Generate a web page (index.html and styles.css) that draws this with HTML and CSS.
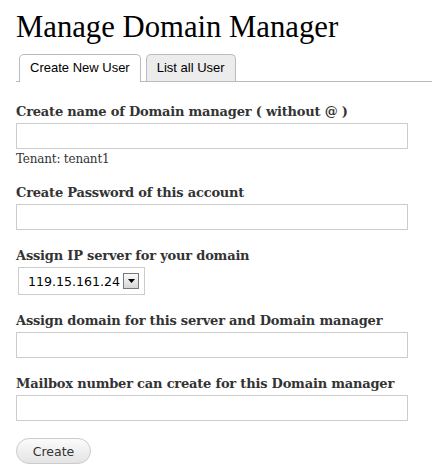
FILE: index.html
```html
<!DOCTYPE html>
<html>
<head>
<meta charset="utf-8">
<link rel="stylesheet" href="styles.css">
</head>
<body>
<div class="page">
  <h1 class="title">Manage Domain Manager</h1>
  <div class="tabs">
    <span class="tab active">Create New User</span>
    <span class="tab">List all User</span>
  </div>
  <form class="form">
    <div class="field">
      <label class="label">Create name of Domain manager ( without @ )</label>
      <input class="text" type="text">
      <div class="hint">Tenant: tenant1</div>
    </div>
    <div class="field">
      <label class="label">Create Password of this account</label>
      <input class="text" type="password">
    </div>
    <div class="field">
      <label class="label">Assign IP server for your domain</label>
      <div class="select">
        <span class="select-value">119.15.161.24</span>
        <span class="select-btn"><svg width="7" height="4" viewBox="0 0 7 4"><path d="M0 0H7L3.5 4Z" fill="#000"/></svg></span>
      </div>
    </div>
    <div class="field">
      <label class="label">Assign domain for this server and Domain manager</label>
      <input class="text" type="text">
    </div>
    <div class="field">
      <label class="label">Mailbox number can create for this Domain manager</label>
      <input class="text" type="text">
    </div>
    <button class="btn" type="button">Create</button>
  </form>
</div>
</body>
</html>
```
FILE: styles.css
```css
html, body { margin: 0; padding: 0; background: #fff; }
.page { padding: 8px 24px 0 16px; }
.title {
  margin: 0;
  font-family: "Liberation Serif", serif;
  font-weight: normal;
  font-size: 30.7px;
  line-height: 38px;
  color: #000;
}
.tabs {
  margin-top: 8px;
  display: flex;
  gap: 5px;
  padding-left: 3px;
  border-bottom: 1px solid #bbb;
  margin-right: -24px;
  height: 27px;
}
.tab {
  font-family: "Liberation Sans", sans-serif;
  font-size: 13px;
  color: #000;
  border: 1px solid #bbb;
  border-bottom: none;
  border-radius: 5px 5px 0 0;
  padding: 0 10px;
  line-height: 26px;
  height: 27px;
  box-sizing: border-box;
  background: #ececec;
}
.tab.active { background: #fff; height: 28px; }
.form { padding-top: 21px; }
.field { margin-bottom: 17px; }
.label {
  display: block;
  font-family: "DejaVu Serif", serif;
  font-weight: bold;
  font-size: 13px;
  color: #333;
  line-height: 18px;
  margin-bottom: 2px;
  letter-spacing: -0.2px;
}
.text {
  display: block;
  box-sizing: border-box;
  width: 392px;
  height: 26px;
  border: 1px solid #ccc;
  margin: 0;
  padding: 0 4px;
}
.hint {
  font-family: "DejaVu Serif", serif;
  font-size: 12px;
  line-height: 15px;
  letter-spacing: -0.2px;
  color: #333;
  margin-top: 3px;
}
.select {
  margin-left: 2px;
  display: flex;
  align-items: center;
  width: 127px;
  height: 28px;
  box-sizing: border-box;
  border: 1px solid #ccc;
  padding: 0 5px 0 9px;
  font-family: "DejaVu Sans", sans-serif;
  font-size: 12.6px;
  color: #000;
  justify-content: space-between;
}
.select-btn {
  width: 16px; height: 16px; box-sizing: border-box;
  border: 1px solid #777;
  background: linear-gradient(#fafafa, #d6d6d6);
  display: flex; align-items: center; justify-content: center;
}
.btn {
  display: block;
  margin-top: 2px;
  width: 75px; height: 26px;
  border: 1px solid #ccc;
  border-radius: 13px;
  background: linear-gradient(#fbfbfb, #e4e4e4);
  font-family: "DejaVu Sans", sans-serif;
  font-size: 12.5px;
  color: #333;
}
```
